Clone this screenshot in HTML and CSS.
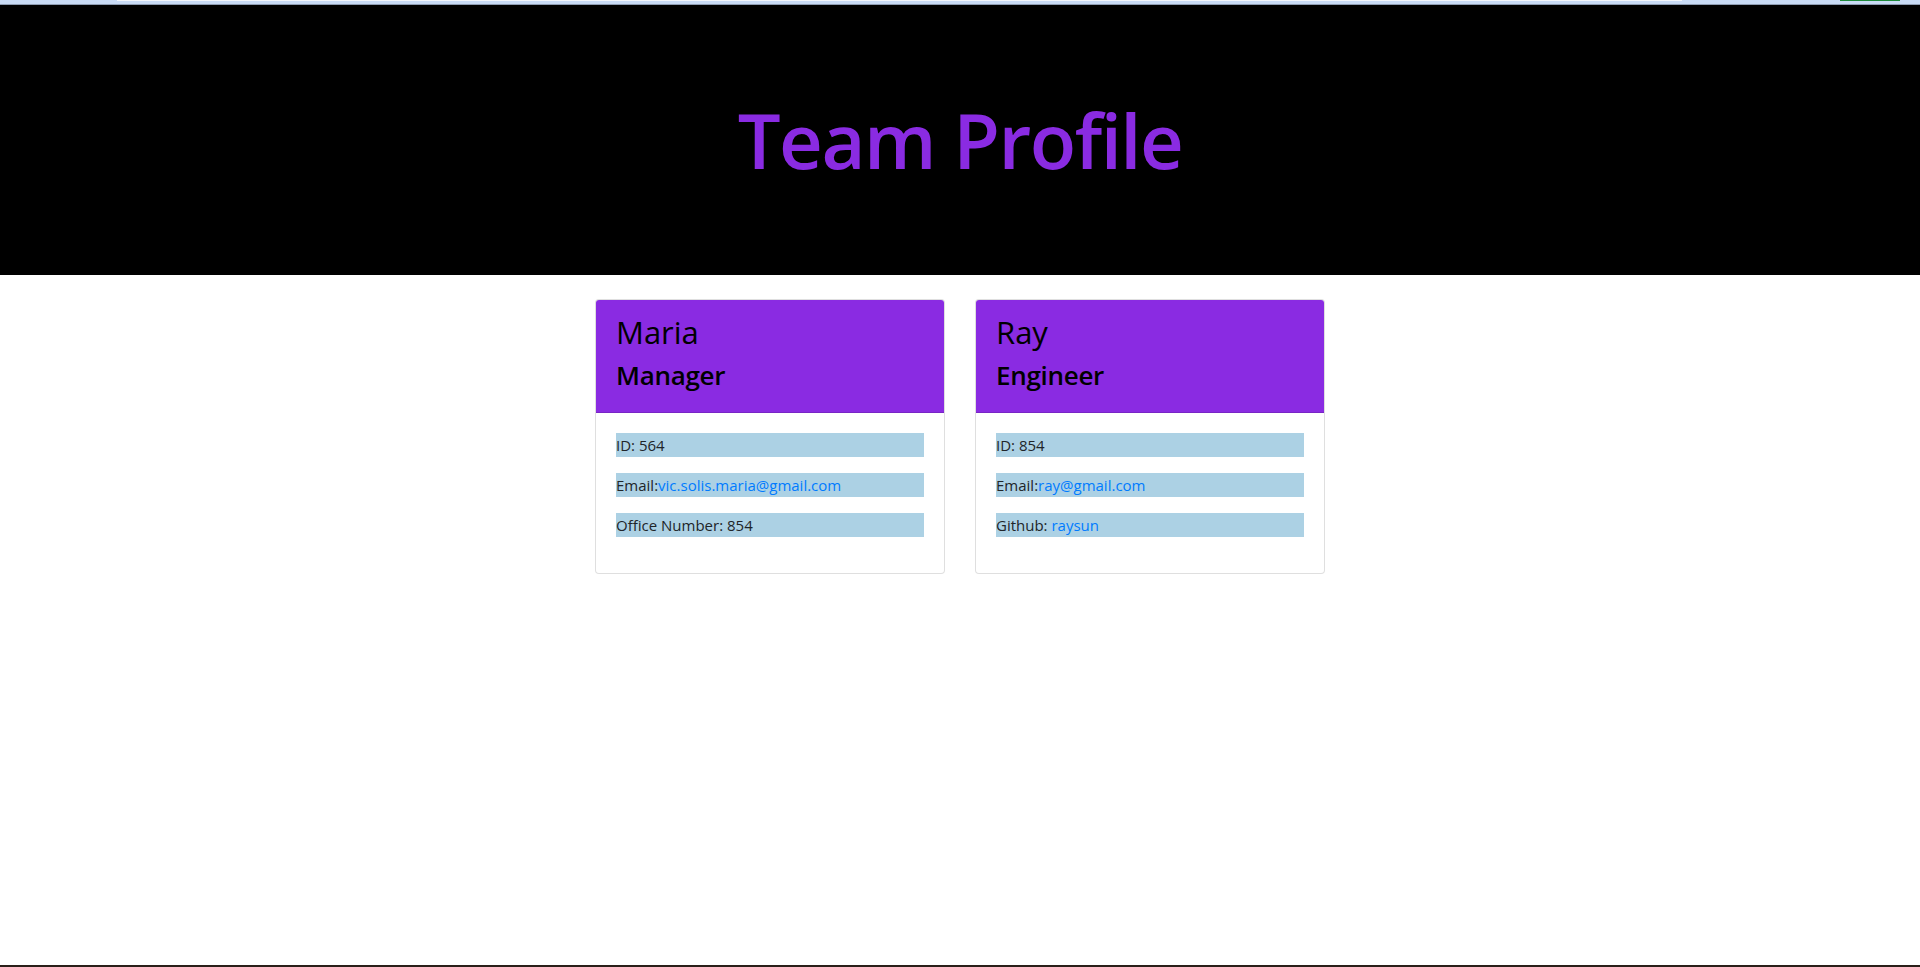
FILE: index.html
```html
<!DOCTYPE html>
<html lang="en">
<head>
<meta charset="utf-8">
<title>Team Profile</title>
<link rel="stylesheet" href="styles.css">
</head>
<body>
<div class="page">
  <div class="chrome">
    <div class="chrome-bar"><span class="chrome-field"></span><span class="chrome-ok"></span></div>
    <div class="chrome-edge"></div>
  </div>
  <header class="hero">
    <h1 class="hero-title">Team Profile</h1>
  </header>
  <main class="team">
    <div class="card">
      <div class="card-header">
        <h2 class="card-name">Maria</h2>
        <h3 class="card-role">Manager</h3>
      </div>
      <div class="card-body">
        <p class="info">ID: 564</p>
        <p class="info">Email:<a href="#">vic.solis.maria@gmail.com</a></p>
        <p class="info">Office Number: 854</p>
      </div>
    </div>
    <div class="card">
      <div class="card-header">
        <h2 class="card-name">Ray</h2>
        <h3 class="card-role">Engineer</h3>
      </div>
      <div class="card-body">
        <p class="info">ID: 854</p>
        <p class="info">Email:<a href="#">ray@gmail.com</a></p>
        <p class="info">Github: <a href="#">raysun</a></p>
      </div>
    </div>
  </main>
  <div class="bottom-line"></div>
</div>
</body>
</html>
```
FILE: styles.css
```css
* { box-sizing: border-box; }
html, body { margin: 0; padding: 0; }
body {
  font-family: "Open Sans", "Noto Sans", "Liberation Sans", sans-serif;
  font-size: 16px;
  line-height: 1.5;
  color: #212529;
  background: #fff;
}
.page {
  min-height: 100vh;
  display: flex;
  flex-direction: column;
}
.chrome { height: 5px; display: flex; flex-direction: column; }
.chrome-bar {
  height: 4px;
  background: #c9dbf5;
  display: flex;
  align-items: flex-start;
}
.chrome-field {
  margin-left: 117px;
  width: 1565px;
  height: 1px;
  background: #f4f7fc;
}
.chrome-ok {
  margin-left: 158px;
  width: 60px;
  height: 1px;
  background: #1e8a3c;
}
.chrome-edge { height: 1px; background: #8f9db3; }
.hero {
  height: 270px;
  background: #000;
  display: flex;
  align-items: center;
  justify-content: center;
}
.hero-title {
  margin: 0;
  color: #8a2be2;
  font-size: 76px;
  font-weight: 600;
  line-height: 1.2;
  letter-spacing: -1.5px;
}
.team {
  flex: 1;
  display: flex;
  justify-content: center;
  align-items: flex-start;
  gap: 30px;
  padding-top: 24px;
}
.card {
  width: 350px;
  border: 1px solid rgba(0,0,0,.125);
  border-radius: 4px;
  background: #fff;
  overflow: hidden;
}
.card-header {
  background: #8a2be2;
  color: #000;
  padding: 13px 20px 11px;
  border-bottom: 1px solid rgba(0,0,0,.125);
}
.card-name {
  margin: 0 0 8px;
  font-size: 31px;
  font-weight: 500;
  line-height: 38.4px;
}
.card-role {
  margin: 0 0 8px;
  font-size: 26px;
  font-weight: 600;
  line-height: 33.6px;
  letter-spacing: -0.3px;
}
.card-body { padding: 20px; }
.info {
  margin: 0 0 16px;
  background: #acd1e4;
  font-size: 15px;
  line-height: 24px;
}
.info a { color: #007bff; text-decoration: none; }
.bottom-line { height: 2px; background: #2a1f19; }
```
